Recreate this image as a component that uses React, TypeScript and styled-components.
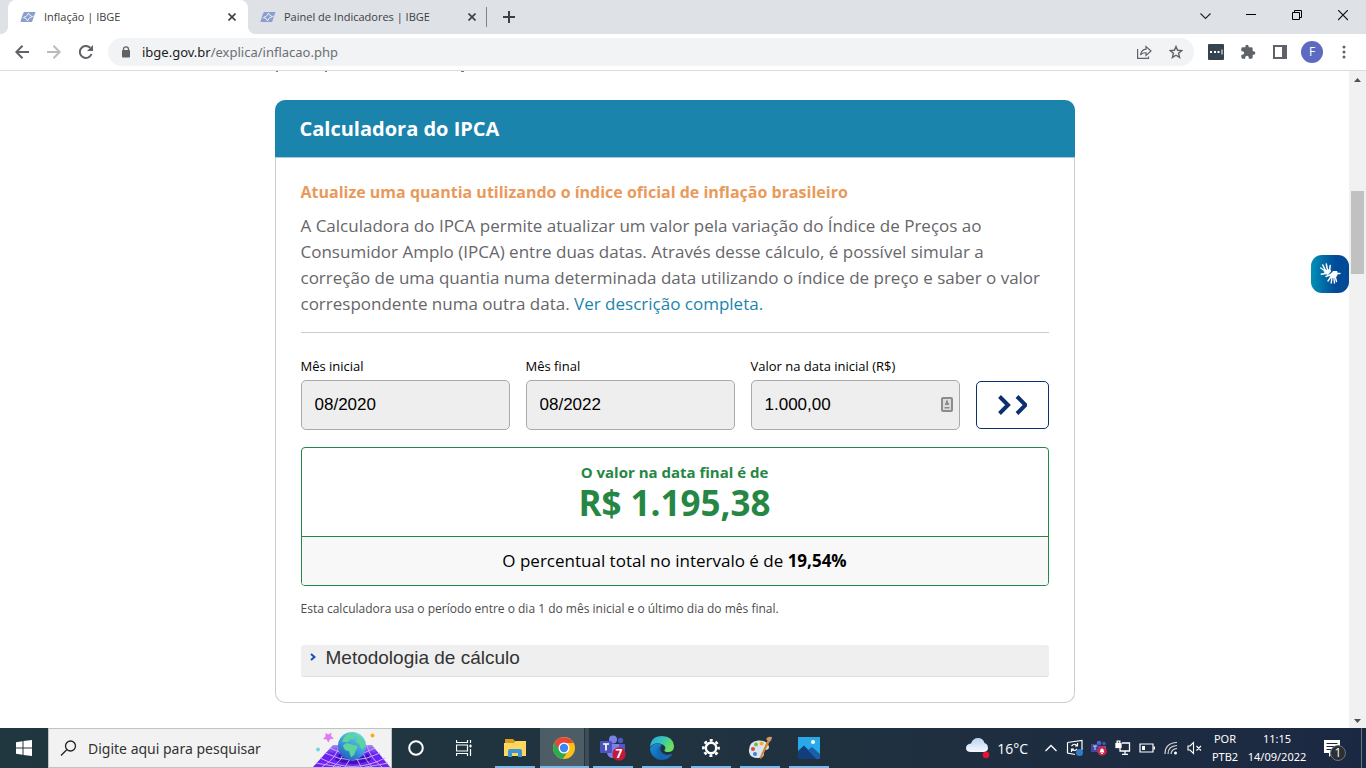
import React from "react";
import styled, { createGlobalStyle } from "styled-components";

const ui = `"Open Sans", "Noto Sans", sans-serif`;

const GlobalStyle = createGlobalStyle`
  *, *::before, *::after { box-sizing: border-box; }
  body { margin: 0; font-family: ${ui}; background: #fff; color: #000; }
  button { border: 0; padding: 0; background: none; font: inherit; color: inherit; cursor: pointer; }
  h1, h2, p { margin: 0; }
  svg { display: block; flex: none; }
`;

const Screen = styled.div`
  display: flex;
  flex-direction: column;
  height: 100vh;
  overflow: hidden;
`;

/* ---------- Browser ---------- */

const TabStrip = styled.div`
  display: flex;
  height: 34px;
  flex: none;
  padding-left: 8px;
  background: #dee1e6;
`;

const Tab = styled.div<{ $active?: boolean }>`
  position: relative;
  display: flex;
  align-items: center;
  width: 240px;
  padding: 0 11px 1px 12px;
  border-radius: 8px 8px 0 0;
  background: ${(p) => (p.$active ? "#fff" : "transparent")};
  color: #3c4043;
  font-size: 11px;

  &::before, &::after {
    content: "";
    display: ${(p) => (p.$active ? "block" : "none")};
    position: absolute;
    bottom: 0;
    width: 8px;
    height: 8px;
  }
  &::before { left: -8px; background: radial-gradient(circle at 0 0, transparent 8px, #fff 8px); }
  &::after { right: -8px; background: radial-gradient(circle at 100% 0, transparent 8px, #fff 8px); }
`;

const TabTitle = styled.span`
  flex: 1;
  margin-left: 8px;
  white-space: nowrap;
`;

const IconButton = styled.button<{ $w?: number }>`
  display: flex;
  align-items: center;
  justify-content: center;
  flex: none;
  width: ${(p) => p.$w ?? 32}px;
  align-self: stretch;
`;

const TabDivider = styled.span`
  width: 1px;
  height: 20px;
  margin: 7px 6px 0 -2px;
  background: #808387;
`;

const Spacer = styled.span`
  flex: 1;
`;

const Toolbar = styled.div`
  display: flex;
  align-items: center;
  height: 37px;
  flex: none;
  padding: 0 6px;
  border-bottom: 1px solid #dadce0;
  background: #fff;
`;

const AddressBar = styled.div`
  display: flex;
  align-items: center;
  flex: 1;
  height: 28px;
  margin: 0 6px;
  padding: 0 2px 0 13px;
  border-radius: 14px;
  background: #f1f3f4;
`;

const Url = styled.span`
  flex: 1;
  margin-left: 11px;
  font-family: "Noto Sans", sans-serif;
  font-size: 13px;
  color: #6b6f74;

  b { font-weight: 400; color: #202124; }
`;

const Avatar = styled.button`
  width: 22px;
  height: 22px;
  margin: 0 5px;
  border-radius: 50%;
  background: #5c6bc0;
  color: #fff;
  font-size: 12px;
  line-height: 22px;
`;

/* ---------- Page ---------- */

const Viewport = styled.div`
  position: relative;
  display: flex;
  flex: 1;
  min-height: 0;
`;

const Page = styled.main`
  flex: 1;
  min-width: 0;
  overflow: hidden;
`;

const Column = styled.div`
  max-width: 800px;
  margin: 0 auto;
`;

const PreviousLine = styled.div`
  height: 29px;
`;

const Card = styled.section`
  border: 1px solid #ccc;
  border-top: 0;
  border-radius: 10px;
`;

const CardHeader = styled.header`
  margin: 0 -1px;
  padding: 0 25px;
  border-bottom: 1px solid #a9cbdb;
  border-radius: 10px 10px 0 0;
  background: #1b84ad;
`;

const CardTitle = styled.h1`
  font-size: 20px;
  line-height: 57px;
  color: #fff;
`;

const CardBody = styled.div`
  padding: 21px 25px 25px;
`;

const Subtitle = styled.h2`
  font-size: 16px;
  line-height: 26px;
  color: #e99a5b;
`;

const Description = styled.p`
  margin-top: 8px;
  font-size: 17px;
  line-height: 26px;
  color: #67666a;

  a { color: #1b84ad; text-decoration: none; }
`;

const Form = styled.form`
  display: grid;
  grid-template-columns: repeat(3, 1fr) 73px;
  gap: 16px;
  align-items: end;
  margin-top: 15px;
  padding-top: 23px;
  border-top: 1px solid #ccc;
`;

const Field = styled.div`
  position: relative;
  display: flex;
  flex-direction: column;
  gap: 4px;
`;

const Label = styled.label`
  font-size: 13px;
  line-height: 20px;
`;

const TextInput = styled.input`
  width: 100%;
  height: 50px;
  padding: 0 13px;
  border: 1px solid #aaa;
  border-radius: 5px;
  background: #eee;
  font-family: "Liberation Sans", Arial, sans-serif;
  font-size: 17px;
  color: #000;
`;

const FieldBadge = styled.span`
  position: absolute;
  right: 7px;
  bottom: 18px;
`;

const SubmitButton = styled.button`
  display: flex;
  align-items: center;
  justify-content: center;
  height: 48px;
  margin-bottom: 1px;
  border: 1px solid #0b2f6f;
  border-radius: 5px;
  background: #fff;
`;

const Result = styled.div`
  margin-top: 17px;
  border: 1px solid #268744;
  border-radius: 4px;
  overflow: hidden;
  text-align: center;
`;

const ResultMain = styled.div`
  padding: 13px 0;
  border-bottom: 1px solid #268744;
  color: #268744;
  font-weight: 700;
`;

const ResultLabel = styled.p`
  font-size: 15px;
  line-height: 22px;
`;

const ResultValue = styled.p`
  font-size: 35px;
  line-height: 40px;
`;

const ResultPercent = styled.p`
  background: #f8f8f8;
  font-size: 17px;
  line-height: 48px;
`;

const Note = styled.p`
  margin-top: 13px;
  font-size: 12px;
  line-height: 20px;
  color: #4c4c4c;
`;

const Accordion = styled.button`
  display: flex;
  align-items: center;
  gap: 10px;
  width: 100%;
  height: 32px;
  margin-top: 26px;
  padding: 0 9px 6px;
  border-bottom: 1px solid #ddd;
  border-radius: 3px;
  background: #efefef;
  font-family: "Liberation Sans", Arial, sans-serif;
  font-size: 19px;
  color: #333;
`;

const LibrasButton = styled.button`
  position: absolute;
  right: 17px;
  top: 184px;
  display: flex;
  align-items: center;
  justify-content: center;
  width: 38px;
  height: 38px;
  border-radius: 11px;
  background: linear-gradient(90deg, #0090b6, #004a98 65%);
`;

const ScrollTrack = styled.div`
  display: flex;
  flex-direction: column;
  align-items: center;
  width: 17px;
  flex: none;
  padding: 6px 0 4px;
  background: #f1f1f1;
`;

const ScrollThumb = styled.div`
  width: 13px;
  height: 83px;
  margin-top: 109px;
  background: #c1c1c1;
`;

/* ---------- Taskbar ---------- */

const Taskbar = styled.footer`
  display: flex;
  height: 40px;
  flex: none;
  background: linear-gradient(90deg, #20373f, #20323f 55%, #1b2842);
  color: #fff;
  font-size: 12px;
`;

const SearchBox = styled.label`
  display: flex;
  align-items: center;
  width: 344px;
  padding-left: 11px;
  border: 1px solid #bfc3c4;
  background: #f2f2f2;
`;

const SearchInput = styled.input`
  flex: 1;
  min-width: 0;
  height: 30px;
  margin-left: 11px;
  padding: 0;
  border: 0;
  background: none;
  font-family: "Noto Sans", sans-serif;
  font-size: 14px;
  color: #333;

  &::placeholder { color: #333; opacity: 1; }
`;

const AppGroup = styled.div`
  display: flex;
  margin-left: 3px;
`;

const AppButton = styled.button<{ $focused?: boolean }>`
  position: relative;
  display: flex;
  align-items: center;
  justify-content: center;
  width: 49px;
  padding-right: 1px;
  background: ${(p) => (p.$focused ? "linear-gradient(90deg, #4c5d66 44px, #26363f 44px, #26363f 45px, #3d4d57 45px)" : "transparent")};

  &::after {
    content: "";
    position: absolute;
    bottom: 0;
    left: ${(p) => (p.$focused ? 0 : 4)}px;
    right: ${(p) => (p.$focused ? 0 : 5)}px;
    height: 2px;
    background: #76b9ed;
  }
`;

const Weather = styled.button`
  display: flex;
  align-items: center;
  gap: 7px;
  margin-right: 11px;
  font-size: 14px;
`;

const TrayText = styled.button<{ $w: number }>`
  width: ${(p) => p.$w}px;
  font-family: "Noto Sans", sans-serif;
  font-size: 11px;
  line-height: 18px;
  text-align: center;
  white-space: nowrap;

  span { display: block; }
`;

const DesktopEdge = styled.span`
  width: 5px;
  margin-left: 6px;
  border-left: 1px solid #6a7384;
`;

/* ---------- Icons ---------- */

const Stroke = ({ w, h = w, d, color = "#5f6368", sw = 2 }: { w: number; h?: number; d: string; color?: string; sw?: number }) => (
  <svg width={w} height={h} viewBox={`0 0 ${w} ${h}`} fill="none" stroke={color} strokeWidth={sw}>
    <path d={d} />
  </svg>
);

const Favicon = () => (
  <svg width="16" height="12" viewBox="0 0 16 12">
    <path d="M4 1H15.500L12 11H.5Q2 4 4 1Z" fill="#8a9fcf" />
    <path d="M8.500 2Q9 5 12.500 5.500 8.500 6.500 7.500 10 7 7 3.500 6.500 7.500 5.500 8.500 2Z" fill="#8a9fcf" stroke="#fff" strokeWidth=".8" />
    <path d="M1.500 7Q3 7 3.500 6.500M12.500 5.500L14 5" stroke="#e6ebf6" strokeWidth=".8" />
  </svg>
);

const CloseIcon = () => <Stroke w={8} d="M.5.5l7 7M7.500 .5l-7 7" color="#3c4043" sw={1.6} />;

const StartIcon = () => (
  <svg width="16" height="16" viewBox="0 0 16 16" fill="#fff">
    <path d="M0 2.200L6.500 1.300V7.500H0ZM7.500 1.100L16 0V7.500H7.500ZM0 8.500H6.500V14.700L0 13.800ZM7.500 8.500H16V16L7.500 14.900Z" />
  </svg>
);

const GlobeArt = () => (
  <svg width="80" height="38" viewBox="0 0 80 38">
    <defs>
      <linearGradient id="sea" x1=".8" y1="0" x2=".2" y2="1">
        <stop offset="0" stopColor="#6be3cf" />
        <stop offset=".5" stopColor="#3d9ee2" />
        <stop offset="1" stopColor="#1f5bb8" />
      </linearGradient>
      <linearGradient id="plane" x1="0" y1="0" x2="0" y2="1">
        <stop offset="0" stopColor="#a98cf5" />
        <stop offset=".4" stopColor="#6424ee" />
        <stop offset="1" stopColor="#7a1df8" />
      </linearGradient>
    </defs>
    <path d="M22 16H61L79 38H2Z" fill="url(#plane)" />
    <path d="M28 25Q42 33 57 25L60 31Q42 39 24 31Z" fill="#3c12b8" />
    <path d="M19 19Q42 32 64 19M14 24Q42 38 69 24M9 29Q42 46 74 29M5 34Q22 37 30 38M77 34Q62 37 54 38M28 16Q27 28 11 38M33 24Q30 32 22 38M39 30L34 38M46 30L50 38M52 24Q55 32 61 38M56 16Q58 28 71 38" fill="none" stroke="#c9a4ff" strokeWidth="1" />
    <circle cx="41" cy="17" r="14" fill="url(#sea)" />
    <path d="M32 16.500Q35 13 39 15L45 16.500Q48 18 45 21L43 26 40 28.500 38 22Q33 22 32 16.500ZM33 8.500Q38 3 45 4L42 7 44 9 39 10.500 37 13 31 13ZM47 6.500Q53 10 54 17L51 21 48 15 45 13Z" fill="#5cd49a" />
    <path d="M14.500 4L17.500 5.500 20.500 3.500 20 7 23 9.500 19 10.200 17.500 13.500 15.500 10.500 12 10 14.500 7.500Z" fill="#e07cf2" />
    <circle cx="61.500" cy="6.500" r="2" fill="#fbaa14" />
    <circle cx="7" cy="20.500" r="2" fill="#6fd8e6" />
  </svg>
);

const FolderIcon = () => (
  <svg width="22" height="20" viewBox="0 0 22 20">
    <path d="M1 1H9L11 3H21V6H1Z" fill="#d99c1b" />
    <path d="M0 5H10L12 3H22V18H0Z" fill="#ffd75e" />
    <path d="M4 19V13Q4 11 6 11H16Q18 11 18 13V19H14V15H8V19Z" fill="#3b96d9" />
  </svg>
);

const ChromeIcon = () => (
  <svg width="22" height="22" viewBox="0 0 22 22">
    <circle cx="11" cy="11" r="11" fill="#fbc116" />
    <path d="M11 11L1.500 5.500A11 11 0 0 0 9.800 21.900L15.500 13.500Z" fill="#2da94f" />
    <path d="M1.500 5.500A11 11 0 0 1 20.600 6H11L6.700 13.500Z" fill="#e8453c" />
    <circle cx="11" cy="11" r="5.500" fill="#fff" />
    <circle cx="11" cy="11" r="4.200" fill="#3f86f4" />
  </svg>
);

const TeamsIcon = () => (
  <svg width="26" height="26" viewBox="0 0 26 26">
    <circle cx="13" cy="4.500" r="4" fill="#7b83eb" />
    <circle cx="20.500" cy="5.500" r="2.700" fill="#5059c9" />
    <path d="M17 9H25V16Q25 20 20 20H17Z" fill="#5059c9" />
    <path d="M7 9H19V17Q19 23 13 23 8 23 7 18Z" fill="#7b83eb" />
    <rect x="0" y="6" width="12" height="12" rx="1" fill="#4b53bc" />
    <path d="M3 9H9M6 9V15.500" stroke="#fff" strokeWidth="1.700" />
    <circle cx="19" cy="19" r="6.700" fill="#c4183c" />
    <text x="19" y="23" textAnchor="middle" fill="#fff" fontSize="12" fontWeight="700" fontFamily="Open Sans, sans-serif">7</text>
  </svg>
);

const EdgeIcon = () => (
  <svg width="24" height="24" viewBox="0 0 24 24">
    <defs>
      <linearGradient id="edgeTop" x1="0" y1="0" x2="1" y2=".4">
        <stop offset="0" stopColor="#2aa7df" />
        <stop offset=".5" stopColor="#35c1c0" />
        <stop offset="1" stopColor="#6be05a" />
      </linearGradient>
      <linearGradient id="edgeLow" x1="0" y1="0" x2="1" y2="1">
        <stop offset="0" stopColor="#1b8fd8" />
        <stop offset="1" stopColor="#0f4fa0" />
      </linearGradient>
    </defs>
    <path d="M0 12A12 12 0 0 0 12 24Q18 24 22 18.500 21.500 17.500 20 18.500 14 20 11 16.500 8 11 12 9 6 5 0 12Z" fill="url(#edgeLow)" />
    <path d="M0 11Q1 0 12 0 23 .5 24 10 24 16 18 16 14 16 14.500 14 17 11 12.500 8.500 5 5 0 11Z" fill="url(#edgeTop)" />
    <path d="M12 8.800Q6 12 8 18 11 24 17 22.700 22 20 22.300 18 14 21 11 15.500 9.500 11 12 8.800Z" fill="#1766b4" />
  </svg>
);

const GearIcon = () => (
  <svg width="18" height="18" viewBox="0 0 18 18" fill="none" stroke="#fff">
    <circle cx="9" cy="9" r="5.200" strokeWidth="2.400" />
    <circle cx="9" cy="9" r="7.600" strokeWidth="2.600" strokeDasharray="3 2.970" strokeDashoffset="1.500" />
  </svg>
);

const PaintIcon = () => (
  <svg width="24" height="24" viewBox="0 0 24 24">
    <path d="M1 16Q0 6 10 4.500 20 4 21 11 21 14 17 14 14 15 16 18 16 22 10 22 2 22 1 16Z" fill="#d7e6f2" />
    <circle cx="5" cy="13" r="2" fill="#e5483d" />
    <circle cx="8" cy="8.500" r="2" fill="#7cb93f" />
    <circle cx="13.500" cy="7.500" r="2" fill="#f2b01e" />
    <circle cx="7" cy="18" r="2" fill="#3f7fd0" />
    <path d="M20 3L22 5 13 23 11.500 22Z" fill="#d9832c" />
    <path d="M18 3Q20 0 24 1 24 4 21.500 6Z" fill="#c8a070" />
  </svg>
);

const PhotosIcon = () => (
  <svg width="22" height="22" viewBox="0 0 22 22">
    <rect width="22" height="22" fill="#2aa9ea" />
    <path d="M0 22V14L6 8.500 19 22Z" fill="#123f7c" />
    <path d="M10 13L14 10 22 17V22H18.500Z" fill="#1d5ea8" />
    <circle cx="15" cy="5" r="2" fill="#fff" />
  </svg>
);

const CloudIcon = () => (
  <svg width="24" height="22" viewBox="0 0 24 22">
    <defs>
      <linearGradient id="cloud" x1="0" y1="0" x2="0" y2="1">
        <stop offset="0" stopColor="#b9d3f3" />
        <stop offset="1" stopColor="#f5f8fd" />
      </linearGradient>
    </defs>
    <path d="M5 15Q0 15 0 11 0 7 5 6.500 7 1 12 1 17 1 18.500 6 22 7 22 11 22 15 17 15Z" fill="url(#cloud)" />
    <circle cx="20" cy="18" r="3.300" fill="#e81133" />
  </svg>
);

const SyncIcon = () => (
  <svg width="18" height="18" viewBox="0 0 18 18" fill="none" stroke="#fff" strokeWidth="1.200">
    <path d="M1.500 3.500L16 1.500V11M1.500 3.500V14L9 15.500M5.500 7Q8.500 3.500 11.500 7M11.500 4V7H9M11 10Q8.500 13 5.500 10M5.500 13V10H8" />
    <circle cx="13.500" cy="13.500" r="3.500" fill="#2f7dcb" stroke="none" />
  </svg>
);

const TrayTeamsIcon = () => (
  <svg width="16" height="16" viewBox="0 0 16 16">
    <circle cx="8" cy="3" r="2.300" fill="#5b62c9" />
    <circle cx="13" cy="3.500" r="1.800" fill="#4b53bc" />
    <path d="M5 6H15V12H5Z" fill="#5b62c9" />
    <rect y="4" width="8" height="8" fill="#3f479f" />
    <path d="M2 6H6M4 6V10" stroke="#cfd3f5" />
    <circle cx="11" cy="11" r="4.700" fill="#d0264a" />
    <path d="M8.800 12.500L9.500 9.500Q11 7.500 12.500 9.500L13.200 12.500ZM10.200 13H11.800V14H10.200Z" fill="#fff" />
  </svg>
);

const NetworkIcon = () => (
  <svg width="16" height="16" viewBox="0 0 16 16" fill="none" stroke="#fff" strokeWidth="1.300">
    <path d="M7 3H14.500V11H5V8M10 11V14M7 14.300H13" />
    <rect x="1" y="3.500" width="5" height="4" fill="#fff" />
    <path d="M2.200 3V1.200H4.800V3" />
  </svg>
);

const BatteryIcon = () => (
  <svg width="16" height="10" viewBox="0 0 16 10">
    <path d="M1 1H14V9H1Z" fill="none" stroke="#fff" strokeWidth="1.200" />
    <path d="M3 3H6V7H3ZM14.500 3.500H16V6.500H14.500Z" fill="#fff" />
  </svg>
);

const WifiIcon = () => (
  <svg width="14" height="14" viewBox="0 0 14 14" fill="none" stroke="#d8dce2" strokeWidth="1.200">
    <path d="M1 13Q1 2 13 1.500M4 13Q4 5 13 4.500M7 13Q7.500 8 13 7.500" />
    <circle cx="11.500" cy="12" r="1.500" fill="#fff" stroke="none" />
  </svg>
);

const MuteIcon = () => (
  <svg width="16" height="14" viewBox="0 0 16 14" fill="none" stroke="#fff" strokeWidth="1.100">
    <path d="M1 5H3L6.500 1.500V12.500L3 9H1ZM9.500 5L14 9.500M14 5L9.500 9.500" />
  </svg>
);

const NoticeIcon = () => (
  <svg width="26" height="26" viewBox="0 0 26 26">
    <path d="M4 5H20V18H13L9 22V18H4Z" fill="#fff" />
    <path d="M6.500 8.500H17.500M6.500 11.500H17.500M6.500 14.500H13" stroke="#1b2842" strokeWidth="1.200" />
    <circle cx="18" cy="18" r="7.500" fill="#2b2f36" stroke="#70757d" />
    <text x="18" y="22" textAnchor="middle" fill="#fff" fontSize="12" fontFamily="Open Sans, sans-serif">1</text>
  </svg>
);

const HandsIcon = () => (
  <svg width="24" height="24" viewBox="0 0 24 24" fill="none" stroke="#fff" strokeLinecap="round" strokeLinejoin="round">
    <path d="M6.500 9L12 7.500 12.500 9.500 10 12.500 7.500 11.500Z" fill="#fff" strokeWidth="1" />
    <path d="M7 9L2.800 6M7.500 8.500L4.800 3M9.500 8L8.300 2M11.500 8.500L12.200 3.500M8 11.500L3.300 12.200" strokeWidth="1.500" />
    <path d="M13 12L15 9.500H19V13L17.500 15.500 12.500 15.500Z" fill="#fff" strokeWidth="1" />
    <path d="M18.500 11.500H22M17.300 15L18.500 19.500M15.800 15.500L16.500 21M14 15.500L13.200 21M12.800 15L10 19M13 12.500L8 14.500" strokeWidth="1.400" />
  </svg>
);

/* ---------- Screen ---------- */

const apps = [
  { name: "Explorador de Arquivos", icon: <FolderIcon /> },
  { name: "Google Chrome", icon: <ChromeIcon />, focused: true },
  { name: "Microsoft Teams", icon: <TeamsIcon /> },
  { name: "Microsoft Edge", icon: <EdgeIcon /> },
  { name: "Configurações", icon: <GearIcon /> },
  { name: "Paint", icon: <PaintIcon /> },
  { name: "Fotos", icon: <PhotosIcon /> },
];

const tray = [
  { name: "Ícones ocultos", icon: <Stroke w={12} h={8} d="M.5 7L6 1.500 11.500 7" color="#fff" sw={1.3} /> },
  { name: "Sincronização", icon: <SyncIcon /> },
  { name: "Teams", icon: <TrayTeamsIcon /> },
  { name: "Rede", icon: <NetworkIcon /> },
  { name: "Bateria", icon: <BatteryIcon /> },
  { name: "Wi-Fi", icon: <WifiIcon /> },
  { name: "Volume", icon: <MuteIcon /> },
];

const Browser = () => (
  <>
    <TabStrip>
      <Tab $active>
        <Favicon />
        <TabTitle>Inflação | IBGE</TabTitle>
        <IconButton $w={10} aria-label="Fechar guia"><CloseIcon /></IconButton>
      </Tab>
      <Tab>
        <Favicon />
        <TabTitle>Painel de Indicadores | IBGE</TabTitle>
        <IconButton $w={10} aria-label="Fechar guia"><CloseIcon /></IconButton>
      </Tab>
      <TabDivider />
      <IconButton aria-label="Nova guia"><Stroke w={12} d="M6 0V12M0 6H12" color="#3c4043" /></IconButton>
      <Spacer />
      <IconButton $w={46} aria-label="Pesquisar guias"><Stroke w={11} h={13} d="M.5 2.500L5.500 7.500 10.500 2.500" color="#222" sw={1.1} /></IconButton>
      <IconButton $w={46} aria-label="Minimizar"><Stroke w={10} h={6} d="M0 .5H10" color="#000" sw={1} /></IconButton>
      <IconButton $w={46} aria-label="Restaurar"><Stroke w={10} h={14} d="M.5 2.500H7.500V9.500H.5ZM2.500 2.500V.5H9.500V7.500H7.500" color="#000" sw={1} /></IconButton>
      <IconButton $w={46} aria-label="Fechar"><Stroke w={10} h={14} d="M0 0L10 10M10 0L0 10" color="#111" sw={1.2} /></IconButton>
    </TabStrip>
    <Toolbar>
      <IconButton aria-label="Voltar"><Stroke w={14} d="M14 7H1.500M7.500 .8L1.300 7 7.500 13.200" /></IconButton>
      <IconButton aria-label="Avançar"><Stroke w={14} d="M0 7H12.500M6.500 .8L12.700 7 6.500 13.200" color="#b9bbbe" /></IconButton>
      <IconButton aria-label="Recarregar">
        <svg width="14" height="14" viewBox="0 0 14 14">
          <path d="M12.500 9A6 6 0 1 1 11.200 2.800" fill="none" stroke="#5f6368" strokeWidth="2" />
          <path d="M14 0V6H8Z" fill="#5f6368" />
        </svg>
      </IconButton>
      <AddressBar>
        <svg width="10" height="12" viewBox="0 0 10 12">
          <path d="M2.500 5V3.300A2.500 2.500 0 0 1 7.500 3.300V5" fill="none" stroke="#5f6368" strokeWidth="1.300" />
          <rect x="1" y="4" width="8" height="7.500" rx="1" fill="#5f6368" />
        </svg>
        <Url><b>ibge.gov.br</b>/explica/inflacao.php</Url>
        <IconButton aria-label="Compartilhar">
          <Stroke w={15} h={14} d="M.6 4V13.400H11.500V11.500M3.500 10Q4.500 4.500 9 4.200V1.500L14 6 9 10.500V7.800Q5.500 7.500 3.500 10Z" sw={1.2} />
        </IconButton>
        <IconButton aria-label="Favoritos">
          <Stroke w={14} d="M7 1.500L8.600 5.300 12.800 5.600 9.600 8.300 10.600 12.400 7 10.200 3.400 12.400 4.400 8.300 1.200 5.600 5.400 5.300Z" sw={1.4} />
        </IconButton>
      </AddressBar>
      <IconButton aria-label="Extensão de senhas">
        <svg width="16" height="16" viewBox="0 0 16 16">
          <rect width="16" height="16" rx="1" fill="#35434e" />
          <path d="M2 7H4V9H2ZM6 7H8V9H6ZM9.500 7H11.500V9H9.500ZM13.500 5.500H14.500V10.500H13.500Z" fill="#fff" />
        </svg>
      </IconButton>
      <IconButton aria-label="Extensões">
        <svg width="16" height="16" viewBox="0 0 24 24" fill="#5f6368">
          <path d="M20.500 11H19V7a2 2 0 0 0-2-2h-4V3.500a2.500 2.500 0 0 0-5 0V5H4a2 2 0 0 0-2 2v3.800h1.500a2.700 2.700 0 0 1 0 5.400H2V20a2 2 0 0 0 2 2h3.800v-1.500a2.700 2.700 0 0 1 5.400 0V22H17a2 2 0 0 0 2-2v-4h1.500a2.500 2.500 0 0 0 0-5z" />
        </svg>
      </IconButton>
      <IconButton aria-label="Painel lateral">
        <svg width="14" height="14" viewBox="0 0 14 14">
          <path d="M1 1H13V13H1Z" fill="none" stroke="#5f6368" strokeWidth="2" />
          <path d="M9 1H13V13H9Z" fill="#5f6368" />
        </svg>
      </IconButton>
      <Avatar aria-label="Perfil">F</Avatar>
      <IconButton aria-label="Menu">
        <svg width="4" height="14" viewBox="0 0 4 14" fill="#5f6368">
          <circle cx="2" cy="2" r="1.500" /><circle cx="2" cy="7" r="1.500" /><circle cx="2" cy="12" r="1.500" />
        </svg>
      </IconButton>
    </Toolbar>
  </>
);

const Calculator = () => (
  <Card>
    <CardHeader><CardTitle>Calculadora do IPCA</CardTitle></CardHeader>
    <CardBody>
      <Subtitle>Atualize uma quantia utilizando o índice oficial de inflação brasileiro</Subtitle>
      <Description>
        A Calculadora do IPCA permite atualizar um valor pela variação do Índice de Preços ao Consumidor Amplo
        (IPCA) entre duas datas. Através desse cálculo, é possível simular a correção de uma quantia numa
        determinada data utilizando o índice de preço e saber o valor correspondente numa outra data.{" "}
        <a href="#descricao">Ver descrição completa.</a>
      </Description>
      <Form onSubmit={(e) => e.preventDefault()}>
        <Field>
          <Label htmlFor="inicio">Mês inicial</Label>
          <TextInput id="inicio" defaultValue="08/2020" />
        </Field>
        <Field>
          <Label htmlFor="fim">Mês final</Label>
          <TextInput id="fim" defaultValue="08/2022" />
        </Field>
        <Field>
          <Label htmlFor="valor">Valor na data inicial (R$)</Label>
          <TextInput id="valor" defaultValue="1.000,00" />
          <FieldBadge>
            <svg width="12" height="15" viewBox="0 0 12 15">
              <rect x="1" y="1" width="10" height="13" rx="1" fill="#dcdcdc" stroke="#8c8c8c" strokeWidth="2" />
              <path d="M4 8V6.500L5 5.500V3.500H7V5.500L8 6.500V8ZM3.500 10H8.500V11.500H3.500Z" fill="#8c8c8c" />
            </svg>
          </FieldBadge>
        </Field>
        <SubmitButton aria-label="Calcular">
          <Stroke w={30} h={20} d="M2.500 1.500L11 10 2.500 18.500M20 1.500L28.500 10 20 18.500" color="#0b2f6f" sw={4} />
        </SubmitButton>
      </Form>
      <Result>
        <ResultMain>
          <ResultLabel>O valor na data final é de</ResultLabel>
          <ResultValue>R$ 1.195,38</ResultValue>
        </ResultMain>
        <ResultPercent>O percentual total no intervalo é de <b>19,54%</b></ResultPercent>
      </Result>
      <Note>Esta calculadora usa o período entre o dia 1 do mês inicial e o último dia do mês final.</Note>
      <Accordion aria-expanded={false}>
        <Stroke w={6} h={10} d="M1 1L4.500 4 1 7" color="#1351b4" sw={2} />
        Metodologia de cálculo
      </Accordion>
    </CardBody>
  </Card>
);

export default function App() {
  return (
    <Screen>
      <GlobalStyle />
      <Browser />
      <Viewport>
        <Page>
          <Column>
            <PreviousLine>
              <svg width="200" height="1" viewBox="0 0 200 1" fill="#77767a">
                <path d="M1 0H3V1H1ZM50 0H52V1H50ZM186 0H189V1H186Z" />
              </svg>
            </PreviousLine>
            <Calculator />
          </Column>
        </Page>
        <LibrasButton aria-label="Conteúdo acessível em Libras"><HandsIcon /></LibrasButton>
        <ScrollTrack>
          <svg width="7" height="5" viewBox="0 0 7 5"><path d="M0 5L3.500 1 7 5Z" fill="#505050" /></svg>
          <ScrollThumb />
          <Spacer />
          <svg width="7" height="5" viewBox="0 0 7 5"><path d="M0 0H7L3.500 4Z" fill="#505050" /></svg>
        </ScrollTrack>
      </Viewport>
      <Taskbar>
        <IconButton $w={48} aria-label="Iniciar"><StartIcon /></IconButton>
        <SearchBox>
          <Stroke w={17} h={16} d="M1 15.500L6.500 10M5.500 6A5 5 0 1 1 15.500 6A5 5 0 1 1 5.500 6" color="#222" sw={1.3} />
          <SearchInput type="text" placeholder="Digite aqui para pesquisar" aria-label="Pesquisar" />
          <GlobeArt />
        </SearchBox>
        <IconButton $w={48} aria-label="Cortana">
          <svg width="16" height="16" viewBox="0 0 16 16"><circle cx="8" cy="8" r="6.800" fill="none" stroke="#fff" strokeWidth="2" /></svg>
        </IconButton>
        <IconButton $w={48} aria-label="Visão de tarefas">
          <Stroke w={16} d="M.5 0V2.500H11.500V0M.5 16V13.500H11.500V16M.5 5H11.500V11H.5ZM14.500 0V3M14.500 4.500V7.500M13 6H16M14.500 9V16" color="#fff" sw={1.2} />
        </IconButton>
        <AppGroup>
          {apps.map((a) => (
            <AppButton key={a.name} $focused={a.focused} aria-label={a.name}>{a.icon}</AppButton>
          ))}
        </AppGroup>
        <Spacer />
        <Weather><CloudIcon />16°C</Weather>
        {tray.map((t) => (
          <IconButton key={t.name} $w={24} aria-label={t.name}>{t.icon}</IconButton>
        ))}
        <TrayText $w={36}><span>POR</span><span>PTB2</span></TrayText>
        <TrayText $w={68}><span>11:15</span><span>14/09/2022</span></TrayText>
        <IconButton $w={44} aria-label="Notificações"><NoticeIcon /></IconButton>
        <DesktopEdge />
      </Taskbar>
    </Screen>
  );
}
